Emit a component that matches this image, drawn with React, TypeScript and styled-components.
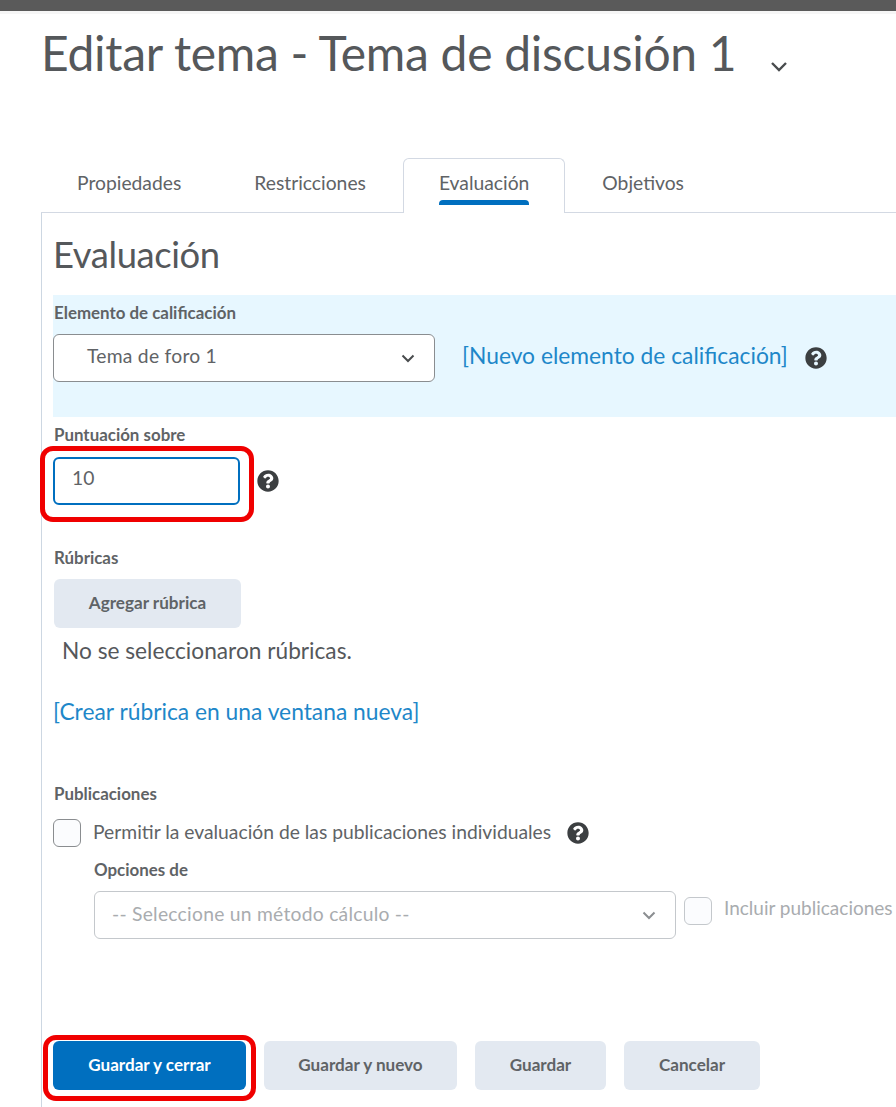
import styled, { createGlobalStyle } from 'styled-components';
import { FaQuestionCircle } from 'react-icons/fa';

const GlobalStyle = createGlobalStyle`
    html, body { margin: 0; padding: 0; background: #fff; }
    body { font-family: Lato, "Open Sans", sans-serif; color: #494c4e; }
`;

const Page = styled.div`
    width: 896px;
    height: 1107px;
    overflow: hidden;
`;

const TopBar = styled.div`
    height: 11px;
    background: #5a5a5a;
    border-bottom: 3px solid #f6f6f6;
`;

const TitleRow = styled.div`
    display: flex;
    align-items: center;
    height: 84px;
    padding-bottom: 6px;
    box-sizing: border-box;
    margin-left: 41px;
    gap: 34px;
`;

const Title = styled.h1`
    margin: 0;
    font-size: 48px;
    font-weight: 400;
    letter-spacing: -0.29px;
    line-height: 78px;
    color: #55585b;
    white-space: nowrap;
`;

const TitleChevron = styled.svg`
    width: 18px;
    height: 12px;
    margin-top: 28px;
    fill: none;
    stroke: #494c4e;
    stroke-width: 2.4;
`;

const Tabs = styled.div`
    display: flex;
    margin: 60px 0 0 41px;
    height: 54px;
    border-bottom: 1px solid #d3d9e3;
`;

const Tab = styled.div<{ $active?: boolean }>`
    position: relative;
    display: flex;
    align-items: center;
    height: ${p => (p.$active ? '55px' : '54px')};
    margin-right: 1px;
    padding: 0 36px 5px;
    box-sizing: border-box;
    font-size: 19.3px;
    color: #606366;
    white-space: nowrap;
    background: #fff;
    ${p => p.$active && `
        border: 1px solid #d3d9e3;
        border-bottom: none;
        border-radius: 6px 6px 0 0;
        padding: 0 35px 7px;
    `}
`;

const TabMarker = styled.span`
    position: absolute;
    left: 35px;
    right: 35px;
    bottom: 8px;
    height: 5px;
    border-radius: 4px 4px 0 0;
    background: #006fbf;
`;

const Panel = styled.div`
    margin-left: 41px;
    padding-left: 11px;
    border-left: 1px solid #cdd7e2;
    height: 895px;
`;

const Heading = styled.h2`
    margin: 0;
    padding: 18px 0 0;
    height: 64px;
    font-size: 36.4px;
    font-weight: 400;
    letter-spacing: -0.4px;
    line-height: 46px;
    color: #55585b;
`;

const GradeBand = styled.div`
    height: 122px;
    padding-top: 8px;
    box-sizing: border-box;
    background: #e7f7ff;
`;

const Label = styled.div<{ $indent?: number }>`
    height: 20px;
    margin-left: ${p => p.$indent ?? 1}px;
    font-size: 16.9px;
    font-weight: 700;
    line-height: 20px;
    color: #5f6366;
`;

const Row = styled.div`
    display: flex;
    align-items: center;
`;

const BandRow = styled(Row)`
    margin-top: 11px;
`;

const SelectBox = styled.div<{ $width: number; $muted?: boolean }>`
    display: flex;
    align-items: center;
    justify-content: space-between;
    width: ${p => p.$width}px;
    height: 48px;
    box-sizing: border-box;
    padding: 0 19px 0 17px;
    background: #fff;
    border: 1px solid ${p => (p.$muted ? '#c4c8cc' : '#8a8d90')};
    border-radius: 6px;
    font-size: 19.3px;
    color: ${p => (p.$muted ? '#a9acaf' : '#606366')};
`;

const SelectValue = styled.span<{ $indent: number; $raise: number }>`
    padding-left: ${p => p.$indent}px;
    padding-bottom: ${p => p.$raise}px;
    letter-spacing: 0.25px;
`;

const Chevron = styled.svg<{ $muted?: boolean }>`
    width: 14px;
    height: 9px;
    fill: none;
    stroke: ${p => (p.$muted ? '#8b8e91' : '#494c4e')};
    stroke-width: 2;
`;

const Link = styled.a`
    font-size: 22.8px;
    color: #1e87c9;
    white-space: nowrap;
`;

const BandLink = styled(Link)`
    margin-left: 27px;
    padding-bottom: 6px;
`;

const HelpIcon = styled(FaQuestionCircle)`
    display: block;
    flex: none;
    color: #3c3f41;
    width: 22px;
    height: 22px;
`;

const BandHelp = styled(HelpIcon)`
    margin-left: 17px;
`;

const ScoreSection = styled.div`
    padding-top: 8px;
`;

const FieldRow = styled(Row)`
    position: relative;
    margin-top: 12px;
    gap: 17px;
`;

const ScoreInput = styled.div`
    width: 187px;
    height: 48px;
    box-sizing: border-box;
    padding: 0 17px 7px;
    display: flex;
    align-items: center;
    border: 2px solid #006fbf;
    border-radius: 6px;
    font-size: 19.3px;
    color: #606366;
`;

const RedFrame = styled.div<{ $left: number; $top: number; $width: number; $height: number }>`
    position: absolute;
    left: ${p => p.$left}px;
    top: ${p => p.$top}px;
    width: ${p => p.$width}px;
    height: ${p => p.$height}px;
    box-sizing: border-box;
    border: 5px solid #f00000;
    border-radius: 13px;
    pointer-events: none;
`;

const RubricSection = styled.div`
    padding-top: 43px;
`;

const ActionButton = styled.button<{ $width: number; $primary?: boolean }>`
    width: ${p => p.$width}px;
    height: 49px;
    padding: 0 0 2px;
    border: none;
    border-radius: 6px;
    font-family: inherit;
    font-size: 17.1px;
    font-weight: 700;
    color: ${p => (p.$primary ? '#fff' : '#5f6366')};
    background: ${p => (p.$primary ? '#006fbf' : '#e3e9f1')};
`;

const AddRubric = styled(ActionButton)`
    display: block;
    margin: 11px 0 0 1px;
`;

const EmptyNote = styled.div`
    margin: 7px 0 0 9px;
    font-size: 22.7px;
    line-height: 32px;
    color: #55585b;
`;

const RubricLink = styled.div`
    margin: 28px 0 0;
    line-height: 32px;
`;

const PostsSection = styled.div`
    padding-top: 54px;
`;

const Checkbox = styled.span<{ $muted?: boolean }>`
    display: block;
    flex: none;
    width: 28px;
    height: 28px;
    box-sizing: border-box;
    border: 1px solid ${p => (p.$muted ? '#c4c8cc' : '#8a8d90')};
    border-radius: 6px;
    background: #fbfcfe;
`;

const CheckRow = styled(Row)`
    margin-top: 15px;
    height: 28px;
`;

const CheckText = styled.span`
    margin-left: 12px;
    padding-bottom: 4px;
    font-size: 19.3px;
    color: #606366;
    white-space: nowrap;
`;

const CheckHelp = styled(HelpIcon)`
    margin-left: 16px;
`;

const OptionsBlock = styled.div`
    margin: 13px 0 0 41px;
`;

const OptionsRow = styled(Row)`
    margin-top: 11px;
    align-items: flex-start;
`;

const IncludeCheck = styled(Row)`
    margin: 5px 0 0 8px;
`;

const IncludeText = styled.span`
    margin: 0 0 6px 12px;
    font-size: 19px;
    color: #a9acaf;
    white-space: nowrap;
`;

const Footer = styled.div`
    position: relative;
    display: flex;
    gap: 18px;
    margin-top: 102px;
`;

const App = () => {
    return (
        <Page>
            <GlobalStyle />
            <TopBar />
            <TitleRow>
                <Title>Editar tema - Tema de discusión 1</Title>
                <TitleChevron viewBox="0 0 18 12"><path d="M2 2l7 7 7-7" /></TitleChevron>
            </TitleRow>
            <Tabs>
                <Tab>Propiedades</Tab>
                <Tab>Restricciones</Tab>
                <Tab $active>Evaluación<TabMarker /></Tab>
                <Tab>Objetivos</Tab>
            </Tabs>
            <Panel>
                <Heading>Evaluación</Heading>
                <GradeBand>
                    <Label>Elemento de calificación</Label>
                    <BandRow>
                        <SelectBox $width={382}>
                            <SelectValue $indent={16} $raise={6}>Tema de foro 1</SelectValue>
                            <Chevron viewBox="0 0 14 9"><path d="M1.5 1.5l5.5 5.5 5.5-5.5" /></Chevron>
                        </SelectBox>
                        <BandLink>[Nuevo elemento de calificación]</BandLink>
                        <BandHelp />
                    </BandRow>
                </GradeBand>
                <ScoreSection>
                    <Label>Puntuación sobre</Label>
                    <FieldRow>
                        <ScoreInput>10</ScoreInput>
                        <HelpIcon />
                        <RedFrame $left={-13} $top={-11} $width={214} $height={76} />
                    </FieldRow>
                </ScoreSection>
                <RubricSection>
                    <Label>Rúbricas</Label>
                    <AddRubric $width={187}>Agregar rúbrica</AddRubric>
                    <EmptyNote>No se seleccionaron rúbricas.</EmptyNote>
                    <RubricLink><Link>[Crear rúbrica en una ventana nueva]</Link></RubricLink>
                </RubricSection>
                <PostsSection>
                    <Label>Publicaciones</Label>
                    <CheckRow>
                        <Checkbox />
                        <CheckText>Permitir la evaluación de las publicaciones individuales</CheckText>
                        <CheckHelp />
                    </CheckRow>
                    <OptionsBlock>
                        <Label $indent={0}>Opciones de</Label>
                        <OptionsRow>
                            <SelectBox $width={582} $muted>
                                <SelectValue $indent={0} $raise={4}>-- Seleccione un método cálculo --</SelectValue>
                                <Chevron $muted viewBox="0 0 14 9"><path d="M1.5 1.5l5.5 5.5 5.5-5.5" /></Chevron>
                            </SelectBox>
                            <IncludeCheck>
                                <Checkbox $muted />
                                <IncludeText>Incluir publicaciones</IncludeText>
                            </IncludeCheck>
                        </OptionsRow>
                    </OptionsBlock>
                </PostsSection>
                <Footer>
                    <ActionButton $width={193} $primary>Guardar y cerrar</ActionButton>
                    <ActionButton $width={193}>Guardar y nuevo</ActionButton>
                    <ActionButton $width={131}>Guardar</ActionButton>
                    <ActionButton $width={136}>Cancelar</ActionButton>
                    <RedFrame $left={-10} $top={-6} $width={213} $height={66} />
                </Footer>
            </Panel>
        </Page>
    );
};

export default App;
